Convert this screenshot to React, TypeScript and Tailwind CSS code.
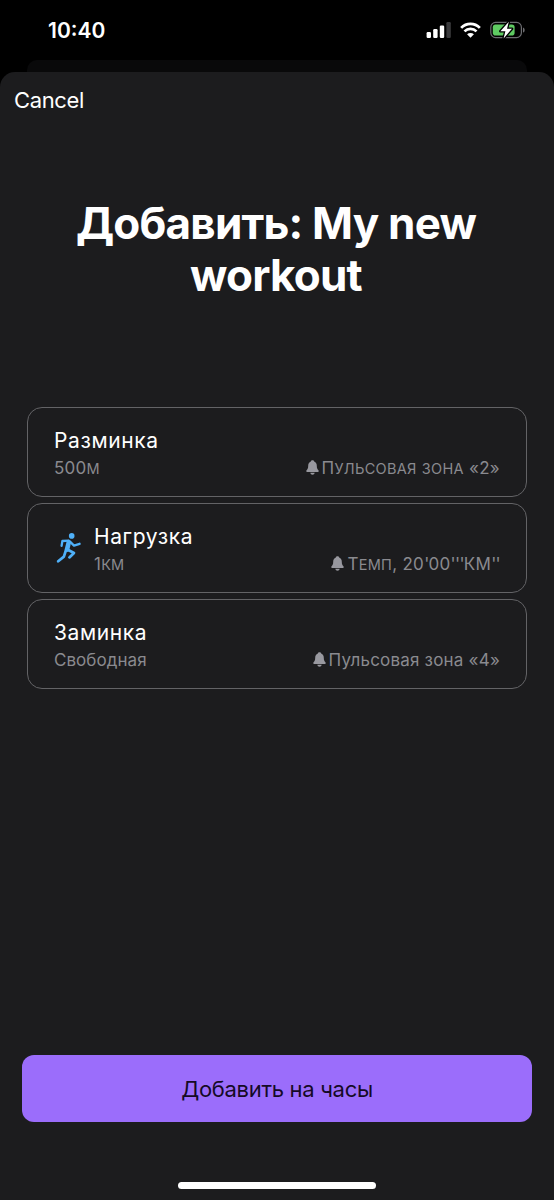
import { clsx } from 'clsx';

interface Step {
  title: string;
  goal: string;
  alert: string;
  smallCaps?: boolean;
  icon?: boolean;
}

const steps: Step[] = [
  { title: 'Разминка', goal: '500м', alert: 'Пульсовая зона «2»', smallCaps: true },
  { title: 'Нагрузка', goal: '1км', alert: "Темп, 20'00'''КМ''", smallCaps: true, icon: true },
  { title: 'Заминка', goal: 'Свободная', alert: 'Пульсовая зона «4»' },
];

function SignalIcon() {
  return (
    <svg width="25" height="16" viewBox="0 0 25 16" fill="#fff">
      <rect x="0.6" y="10" width="4.4" height="6" rx="1.2" />
      <rect x="7.2" y="7" width="4.4" height="9" rx="1.2" />
      <rect x="13.8" y="3.6" width="4.4" height="12.4" rx="1.2" />
      <rect x="20.4" y="0" width="4.4" height="16" rx="1.2" fill="#3a3a3c" />
    </svg>
  );
}

function WifiIcon() {
  return (
    <svg width="21" height="16" viewBox="0 0 22 16" fill="none" stroke="#fff">
      <path d="M1.2 5.8 C6.6 0.2 15.4 0.2 20.8 5.8" strokeWidth="2.9" />
      <path d="M4.7 9.4 C8.2 5.9 13.8 5.9 17.3 9.4" strokeWidth="2.8" />
      <path d="M11 16 L7.4 12.4 C9.4 10.6 12.6 10.6 14.6 12.4 Z" fill="#fff" stroke="none" />
    </svg>
  );
}

function BatteryIcon() {
  return (
    <svg width="36" height="18" viewBox="0 0 36 18">
      <rect x="0.8" y="1.4" width="30.6" height="15.2" rx="4.8" fill="none" stroke="#6c6c70" strokeWidth="1.2" />
      <rect x="2.8" y="3.4" width="21.8" height="11.2" rx="2.8" fill="#5fcb62" />
      <path d="M33 6.4 C35.2 7.2 35.2 10.8 33 11.6 Z" fill="#6c6c70" />
      <path
        d="M18.8 0.8 L10.4 10.2 H15.4 L13.6 17.4 L22 7.8 H17 Z"
        fill="#fff"
        stroke="#000"
        strokeWidth="2.6"
        strokeLinejoin="round"
        paintOrder="stroke"
      />
    </svg>
  );
}

function RunnerIcon() {
  return (
    <svg width="26" height="30" viewBox="0 0 26 30" fill="none" stroke="#4fb0f8" strokeLinecap="round" strokeLinejoin="round">
      <circle cx="15.7" cy="2.9" r="2.8" fill="#4fb0f8" stroke="none" />
      <path d="M5.6 12.8 L6.4 8 L12.6 7.6" strokeWidth="2.3" />
      <path d="M12.8 9.2 L11 16.6" strokeWidth="4.6" />
      <path d="M14 8.6 L18 12.6 L23.6 10.8" strokeWidth="2.3" />
      <path d="M11.8 16.8 L18 20 L13.4 24.4" strokeWidth="2.7" />
      <path d="M10 17 L7.9 23.6 L2.2 28.3" strokeWidth="2.7" />
    </svg>
  );
}

function BellIcon() {
  return (
    <svg width="13" height="15" viewBox="0 0 13 15" fill="#98989f">
      <path d="M6.5 0.3 C5.6 0.3 5 0.8 4.8 1.5 C3 2.2 2.2 3.8 2.2 5.7 C2.2 8.4 1.6 9.1 0.6 10.2 C-0.1 11 0.2 12 1.2 12 H11.8 C12.8 12 13.1 11 12.4 10.2 C11.4 9.1 10.8 8.4 10.8 5.7 C10.8 3.8 10 2.2 8.2 1.5 C8 0.8 7.4 0.3 6.5 0.3 Z" />
      <path d="M4.3 12.8 H8.7 C8.5 14 7.6 14.7 6.5 14.7 C5.4 14.7 4.5 14 4.3 12.8 Z" />
    </svg>
  );
}

// lowercase runs become slightly shorter capitals, prime marks sit closer together
function SmallCaps({ text }: { text: string }) {
  return (
    <>
      {text.split(/([а-я]+|'+)/).map((part, i) =>
        i % 2 ? (
          <span key={i} className={part.startsWith("'") ? 'tracking-[-0.7px]' : 'text-[14.5px] uppercase'}>
            {part}
          </span>
        ) : (
          part
        )
      )}
    </>
  );
}

function StepCard({ step }: { step: Step }) {
  return (
    <div className="flex h-[90px] items-center rounded-[15px] border border-[#636366] pt-[3px] pr-[26px] pl-[26px]">
      {step.icon && (
        <div className="mr-[13px] w-[27px] pb-[3px] pl-[2px]">
          <RunnerIcon />
        </div>
      )}
      <div className="flex-1 whitespace-nowrap">
        <div className="text-[21px] leading-[28px] tracking-[0.6px] text-white">{step.title}</div>
        <div className="flex h-[26px] items-center justify-between text-[17px] leading-[26px] text-[#8a8a8f]">
          <span className={clsx(step.smallCaps ? 'pt-[2px] tracking-[0.2px]' : 'tracking-[0.05px]')}>
            {step.smallCaps ? <SmallCaps text={step.goal} /> : step.goal}
          </span>
          <span className="flex items-center gap-[3px]">
            <BellIcon />
            <span className={clsx(step.smallCaps ? 'pt-[2px] tracking-[0.3px]' : 'tracking-[0.2px]')}>
              {step.smallCaps ? <SmallCaps text={step.alert} /> : step.alert}
            </span>
          </span>
        </div>
      </div>
    </div>
  );
}

export default function App() {
  return (
    <div className="flex h-[1200px] w-[554px] flex-col overflow-hidden bg-black font-['Inter',sans-serif]">
      <header className="flex h-[60px] items-center justify-between pr-[28px] pl-[48px]">
        <span className="pt-[2px] text-[21px] font-semibold text-white">10:40</span>
        <div className="flex items-center gap-[9px]">
          <SignalIcon />
          <WifiIcon />
          <BatteryIcon />
        </div>
      </header>
      <div className="mx-[27px] h-[12px] shrink-0 rounded-t-[10px] bg-[#09090a]" />

      <main className="flex flex-1 flex-col rounded-t-[15px] bg-[#1c1c1e]">
        <button className="mt-[14px] ml-[14px] self-start text-[22px] leading-[28px] tracking-[-0.35px] text-white">
          Cancel
        </button>
        <h1 className="mt-[83px] mr-[2px] text-center text-[44px] leading-[52px] font-bold tracking-[-0.8px] text-white">
          Добавить: My new
          <br />
          workout
        </h1>
        <section className="mx-[27px] mt-[106px] flex flex-col gap-[6px]">
          {steps.map((step) => (
            <StepCard key={step.title} step={step} />
          ))}
        </section>
        <div className="mt-auto flex flex-col px-[22px] pb-[11px]">
          <button className="h-[67px] rounded-[12px] bg-[#9b6dfb] pt-[2px] text-[22px] tracking-[-0.3px] text-[#150a26]">
            Добавить на часы
          </button>
          <div className="mt-[60px] h-[7px] w-[198px] self-center rounded-full bg-white" />
        </div>
      </main>
    </div>
  );
}
